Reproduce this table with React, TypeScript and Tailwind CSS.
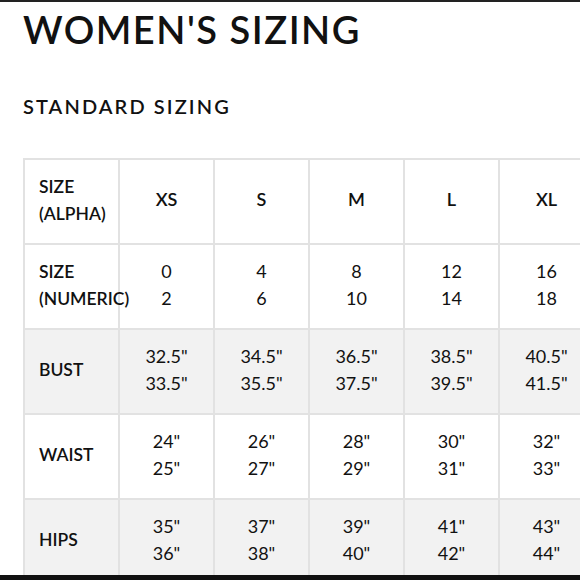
import React from 'react'

type Row = {
  label: string[]
  values: string[][]
  shaded?: boolean
  bold?: boolean
}

const rows: Row[] = [
  {
    label: ['SIZE', '(ALPHA)'],
    values: [['XS'], ['S'], ['M'], ['L'], ['XL']],
    bold: true,
  },
  {
    label: ['SIZE', '(NUMERIC)'],
    values: [['0', '2'], ['4', '6'], ['8', '10'], ['12', '14'], ['16', '18']],
  },
  {
    label: ['BUST'],
    values: [
      ['32.5"', '33.5"'],
      ['34.5"', '35.5"'],
      ['36.5"', '37.5"'],
      ['38.5"', '39.5"'],
      ['40.5"', '41.5"'],
    ],
    shaded: true,
  },
  {
    label: ['WAIST'],
    values: [
      ['24"', '25"'],
      ['26"', '27"'],
      ['28"', '29"'],
      ['30"', '31"'],
      ['32"', '33"'],
    ],
  },
  {
    label: ['HIPS'],
    values: [
      ['35"', '36"'],
      ['37"', '38"'],
      ['39"', '40"'],
      ['41"', '42"'],
      ['43"', '44"'],
    ],
    shaded: true,
  },
]

export default function App() {
  return (
    <div className="flex h-[580px] w-[580px] flex-col overflow-hidden bg-white font-['Lato',sans-serif] text-[#111]">
      <div className="h-[2px] shrink-0 bg-[#222]" />
      <div className="flex-1 overflow-hidden pl-[23px]">
        <h1 className="mt-[4px] text-[38px] font-semibold leading-[46px] tracking-[1.5px]">
          WOMEN'S SIZING
        </h1>
        <h2 className="mt-[42px] text-[20px] font-semibold leading-[24px] tracking-[2.1px]">
          STANDARD SIZING
        </h2>
        <div className="mt-[40px] grid w-[600px] grid-cols-[95px_95px_95px_95px_95px_125px] border-l-2 border-t-2 border-[#e2e2e2]">
          {rows.map((row, r) => (
            <React.Fragment key={r}>
              <div
                className={`flex h-[85px] flex-col justify-center border-b-2 border-r-2 border-[#e2e2e2] pb-[4px] pl-[14px] text-[17.5px] font-semibold leading-[27px] ${row.shaded ? 'bg-[#f2f2f2]' : 'bg-white'}`}
              >
                {row.label.map((l) => (
                  <span key={l} className="relative z-10 whitespace-nowrap">
                    {l}
                  </span>
                ))}
              </div>
              {row.values.map((v, i) => (
                <div
                  key={i}
                  className={`flex h-[85px] flex-col items-center justify-center border-b-2 border-r-2 border-[#e2e2e2] pb-[4px] text-[18px] leading-[27px] ${i === 4 ? 'pr-[30px]' : ''} ${row.bold ? 'font-semibold' : 'font-normal'} ${row.shaded ? 'bg-[#f2f2f2]' : 'bg-white'}`}
                >
                  {v.map((t, k) => (
                    <span key={k}>{t}</span>
                  ))}
                </div>
              ))}
            </React.Fragment>
          ))}
        </div>
      </div>
      <div className="h-[5px] shrink-0 bg-[#111]" />
    </div>
  )
}
